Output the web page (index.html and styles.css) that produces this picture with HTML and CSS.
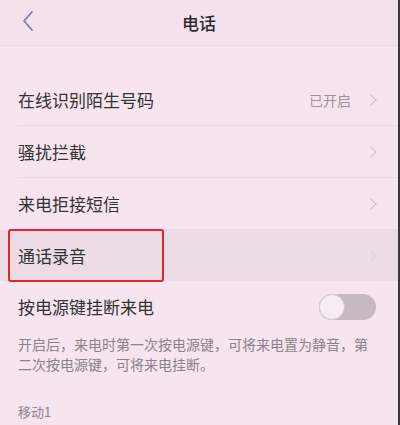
FILE: index.html
```html
<!DOCTYPE html>
<html lang="zh-CN">
  <head>
    <meta charset="UTF-8" />
    <meta name="viewport" content="width=device-width, initial-scale=1.0" />
    <title>电话</title>
    <link rel="stylesheet" href="styles.css">
  </head>
  <body>
    <header class="topbar">
      <span class="back">
        <svg width="14" height="22" viewBox="0 0 14 22">
          <path d="M11 2 L3 11 L11 20" fill="none" stroke="#7b7fb3" stroke-width="1.8" stroke-linecap="round" stroke-linejoin="round" />
        </svg>
      </span>
      <h1>电话</h1>
    </header>

    <main class="list">
      <div class="row">
        <span class="label">在线识别陌生号码</span>
        <span class="value">已开启</span>
        <span class="chev"></span>
      </div>
      <div class="row">
        <span class="label">骚扰拦截</span>
        <span class="chev"></span>
      </div>
      <div class="row">
        <span class="label">来电拒接短信</span>
        <span class="chev"></span>
      </div>
      <div class="row row-active">
        <span class="label">通话录音</span>
        <span class="chev faint"></span>
        <span class="mark"></span>
      </div>
      <div class="row row-plain">
        <span class="label">按电源键挂断来电</span>
        <span class="switch"><span class="knob"></span></span>
      </div>
      <p class="note">开启后，来电时第一次按电源键，可将来电置为静音，第二次按电源键，可将来电挂断。</p>
      <p class="section">移动1</p>
    </main>
  </body>
</html>
```

FILE: styles.css
```css
body {
  margin: 0;
  padding: 0;
  width: 400px;
  height: 425px;
  overflow: hidden;
  background-color: #f6e4ef;
  font-family: "Noto Sans CJK SC", "Noto Sans", sans-serif;
  color: #333;
  border-right: 2px solid #3a3540;
  box-sizing: border-box;
}

.topbar {
  position: relative;
  height: 45px;
  display: flex;
  align-items: center;
  justify-content: center;
  background-color: #f3e1ec;
  border-bottom: 1px solid #ead6e2;
}

.topbar h1 {
  margin: 0;
  font-size: 17px;
  font-weight: 500;
  color: #2e2a2e;
}

.back {
  position: absolute;
  left: 21px;
  top: 10px;
}

.list {
  padding-top: 28px;
}

.row {
  position: relative;
  height: 51px;
  display: flex;
  align-items: center;
  margin-left: 18px;
  padding-right: 20px;
  border-bottom: 1px solid #ecdbe6;
}

.row .label {
  font-size: 17px;
  flex: 1;
  color: #333;
}

.row .value {
  font-size: 14px;
  color: #9a9398;
  margin-right: 16px;
}

.chev {
  width: 7px;
  height: 7px;
  border-top: 1.5px solid #c9bec6;
  border-right: 1.5px solid #c9bec6;
  transform: rotate(45deg);
  margin-right: 3px;
}

.chev.faint {
  border-color: #e0d4dc;
}

.row-active {
  margin-left: 0;
  padding-left: 18px;
  background-color: #ecdce6;
  border-bottom: none;
}

.mark {
  position: absolute;
  left: 8px;
  top: -1px;
  width: 152px;
  height: 49px;
  border: 2px solid #e8232a;
  border-radius: 3px;
}

.row-plain {
  border-bottom: none;
}

.switch {
  width: 57px;
  height: 26px;
  border-radius: 13px;
  background-color: #c6b9c3;
  position: relative;
  margin-right: 2px;
}

.knob {
  position: absolute;
  left: 0;
  top: 0;
  width: 24px;
  height: 24px;
  border-radius: 50%;
  background-color: #f8ecf4;
  border: 1px solid #d6c8d1;
}

.note {
  margin: 2px 28px 0 18px;
  font-size: 14px;
  line-height: 20px;
  color: #8a8388;
}

.section {
  margin: 28px 18px 0;
  font-size: 13px;
  color: #8a8388;
}
```
